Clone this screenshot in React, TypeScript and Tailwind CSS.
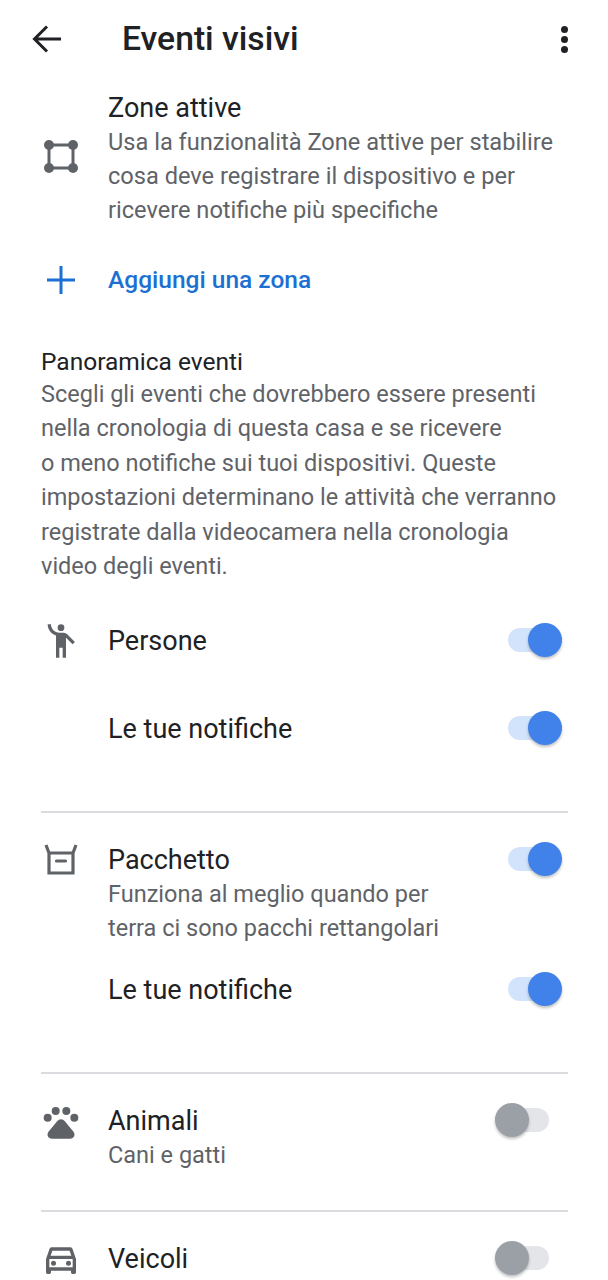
const font = { fontFamily: "Roboto, sans-serif" };

function Toggle({ on }: { on: boolean }) {
  if (on) {
    return (
      <div className="relative -mt-px h-[34px] w-[54px] shrink-0">
        <div className="absolute left-0 top-[5px] h-[24px] w-[48px] rounded-full bg-[#d2e3fc]" />
        <div className="absolute right-0 top-0 h-[34px] w-[34px] rounded-full bg-[#4082ea] shadow-[0_2px_3px_rgba(0,0,0,0.25)]" />
      </div>
    );
  }
  return (
    <div className="relative -mt-px h-[34px] w-[54px] shrink-0">
      <div className="absolute right-0 top-[5px] h-[24px] w-[48px] rounded-full bg-[#e3e5e8]" />
      <div className="absolute left-0 top-0 h-[34px] w-[34px] rounded-full bg-[#9aa0a6] shadow-[0_2px_3px_rgba(0,0,0,0.25)]" />
    </div>
  );
}

function ZoneIcon() {
  return (
    <svg width="40" height="40" viewBox="0 0 40 40" fill="none" className="text-[#5f6368]">
      <rect x="8" y="8" width="24" height="23" stroke="currentColor" strokeWidth="3" />
      <circle cx="8" cy="8" r="5" fill="currentColor" />
      <circle cx="32" cy="8" r="5" fill="currentColor" />
      <circle cx="8" cy="31" r="5" fill="currentColor" />
      <circle cx="32" cy="31" r="5" fill="currentColor" />
    </svg>
  );
}

function PlusIcon() {
  return (
    <svg width="40" height="40" viewBox="0 0 40 40" fill="none" stroke="#1c70d4" strokeWidth="3">
      <path d="M6 20h28M20 6v28" />
    </svg>
  );
}

function PersonIcon() {
  return (
    <svg width="40" height="40" viewBox="0 0 24 24" fill="#5f6368">
      <circle cx="12" cy="4" r="2" />
      <path d="M15.89 8.11C15.5 7.72 14.83 7 13.53 7h-2.54C8.24 6.99 6 4.75 6 2H4c0 3.16 2.11 5.84 5 6.71V22h2v-6h2v6h2V10.05L18.95 14l1.41-1.41-4.47-4.48z" />
    </svg>
  );
}

function PackageIcon() {
  return (
    <svg width="40" height="40" viewBox="0 0 40 40" fill="none" stroke="#5f6368" strokeWidth="3.2">
      <path d="M5 5l3 8h24l3-8M8 13v20h24V13" />
      <path d="M15.5 21h9" strokeLinecap="round" />
    </svg>
  );
}

function PawIcon() {
  return (
    <svg width="40" height="40" viewBox="0 0 24 24" fill="#5f6368">
      <circle cx="4" cy="10" r="2.400" />
      <circle cx="8.800" cy="6" r="2.400" />
      <circle cx="15.200" cy="6" r="2.400" />
      <circle cx="20" cy="10" r="2.400" />
      <path d="M12 11c-.9 0-1.700.5-2.300 1.200L4.600 18.300c-1.500 1.900-.4 4.300 2 4.300h10.800c2.400 0 3.500-2.400 2-4.300l-5.100-6.100C13.700 11.500 12.900 11 12 11z" />
    </svg>
  );
}

function CarIcon() {
  return (
    <svg width="40" height="40" viewBox="0 0 24 24" fill="#5f6368">
      <path d="M18.92 6.01C18.72 5.42 18.16 5 17.5 5h-11c-.66 0-1.21.42-1.42 1.01L3 12v8c0 .55.45 1 1 1h1c.55 0 1-.45 1-1v-1h12v1c0 .55.45 1 1 1h1c.55 0 1-.45 1-1v-8l-2.08-5.99zM6.85 7h10.29l1.08 3.11H5.77L6.85 7zM19 17H5v-5h14v5z" />
      <circle cx="7.5" cy="14.5" r="1.5" />
      <circle cx="16.5" cy="14.5" r="1.5" />
    </svg>
  );
}

function Row({
  icon,
  title,
  on,
  desc,
}: {
  icon?: React.ReactNode;
  title: string;
  on: boolean;
  desc?: string[];
}) {
  return (
    <div className="flex items-start">
      <div className="flex h-[34px] w-[67px] shrink-0 items-center">{icon}</div>
      <div className="flex-1">
        <div className="h-[34px] text-[27px] leading-[34px] text-[#202124]">{title}</div>
        {desc?.map((line) => (
          <div key={line} className="h-[34px] text-[23.5px] leading-[34px] text-[#5f6368]">
            {line}
          </div>
        ))}
      </div>
      <Toggle on={on} />
    </div>
  );
}

export default function App() {
  return (
    <div className="h-[1280px] w-[608px] overflow-hidden bg-white" style={font}>
      {/* Header */}
      <div className="flex h-[78px] items-center pl-[28px] pr-[40px]">
        <svg width="40" height="40" viewBox="0 0 40 40" fill="none" stroke="#202124" strokeWidth="3">
          <path d="M33 20H7M19 7.500L6.500 20 19 32.500" />
        </svg>
        <div className="ml-[54px] flex-1 text-[33.700px] font-medium leading-[40px] text-[#202124]">Eventi visivi</div>
        <div className="flex flex-col gap-[3px]">
          <span className="h-[7px] w-[7px] rounded-full bg-[#202124]" />
          <span className="h-[7px] w-[7px] rounded-full bg-[#202124]" />
          <span className="h-[7px] w-[7px] rounded-full bg-[#202124]" />
        </div>
      </div>

      <div className="pl-[41px] pr-[40px]">
        {/* Zone attive */}
        <div className="mt-[13px] flex items-center">
          <div className="-mt-[5px] w-[67px] shrink-0">
            <ZoneIcon />
          </div>
          <div>
            <div className="h-[34px] text-[27px] leading-[34px] text-[#202124]">Zone attive</div>
            <div className="text-[23.600px] leading-[34px] text-[#5f6368]">
              <div>Usa la funzionalità Zone attive per stabilire</div>
              <div>cosa deve registrare il dispositivo e per</div>
              <div>ricevere notifiche più specifiche</div>
            </div>
          </div>
        </div>

        <div className="mt-[33px] flex h-[40px] items-center">
          <div className="w-[67px] shrink-0">
            <PlusIcon />
          </div>
          <div className="text-[24.500px] font-[470] text-[#1c70d4]">Aggiungi una zona</div>
        </div>

        {/* Panoramica */}
        <div className="mt-[45px] h-[32px] text-[24.500px] font-[450] leading-[34px] text-[#202124]">Panoramica eventi</div>
        <div className="text-[23.500px] leading-[34.400px] text-[#5f6368]">
          <div>Scegli gli eventi che dovrebbero essere presenti</div>
          <div>nella cronologia di questa casa e se ricevere</div>
          <div>o meno notifiche sui tuoi dispositivi. Queste</div>
          <div>impostazioni determinano le attività che verranno</div>
          <div>registrate dalla videocamera nella cronologia</div>
          <div>video degli eventi.</div>
        </div>

        <div className="mt-[41px] flex flex-col gap-[54px] pr-[6px]">
          <Row icon={<PersonIcon />} title="Persone" on />
          <Row title="Le tue notifiche" on />
        </div>

        <div className="mt-[65px] border-t-2 border-[#dadce0] pt-[30px]">
          <div className="pr-[6px]">
            <Row icon={<PackageIcon />} title="Pacchetto" on desc={["Funziona al meglio quando per", "terra ci sono pacchi rettangolari"]} />
            <div className="mt-[28px]">
              <Row title="Le tue notifiche" on />
            </div>
          </div>
        </div>

        <div className="mt-[65px] border-t-2 border-[#dadce0] pt-[30px]">
          <div className="pr-[19px]">
            <Row icon={<PawIcon />} title="Animali" on={false} desc={["Cani e gatti"]} />
          </div>
        </div>

        <div className="mt-[38px] border-t-2 border-[#dadce0] pt-[30px]">
          <div className="pr-[19px]">
            <Row icon={<CarIcon />} title="Veicoli" on={false} />
          </div>
        </div>
      </div>
    </div>
  );
}
